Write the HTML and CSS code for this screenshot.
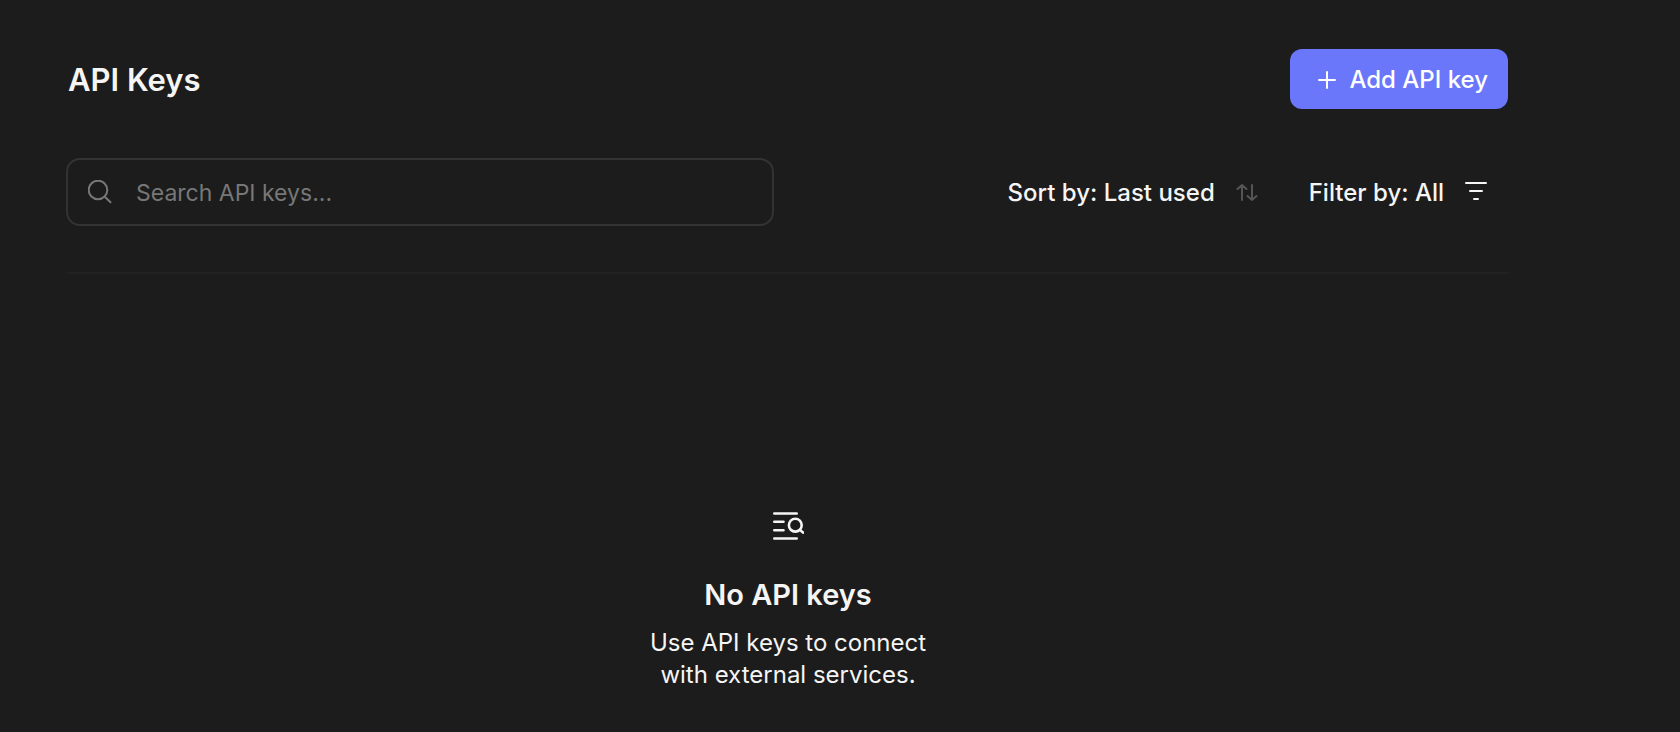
FILE: index.html
```html
<!DOCTYPE html>
<html lang="en">
<head>
  <meta charset="UTF-8" />
  <meta name="viewport" content="width=device-width, initial-scale=1.0"/>
  <title>API Keys</title>
  <link rel="stylesheet" href="styles.css">
</head>
<body>
  <main class="page">
    <header class="page-header">
      <h1>API Keys</h1>
      <button type="button" class="add-button">
        <svg width="20" height="20" viewBox="0 0 20 20" fill="none" stroke="currentColor" stroke-width="2" stroke-linecap="round" aria-hidden="true">
          <path d="M10 2v16M2 10h16"/>
        </svg>
        Add API key
      </button>
    </header>

    <div class="toolbar">
      <label class="search">
        <svg width="24" height="24" viewBox="0 0 24 24" fill="none" stroke="currentColor" stroke-width="2" stroke-linecap="round" aria-hidden="true">
          <circle cx="10" cy="10" r="9.3"/>
          <path d="M16.8 16.8l5.7 5.4"/>
        </svg>
        <input type="search" placeholder="Search API keys..." aria-label="Search API keys" />
      </label>
      <div class="controls">
        <button type="button" class="control">
          Sort by: Last used
          <svg class="muted" width="24" height="24" viewBox="0 0 24 24" fill="none" stroke="currentColor" stroke-width="2" stroke-linecap="round" stroke-linejoin="round" aria-hidden="true">
            <path d="M7 19V4M2.5 8L7 4l4.5 4M17 4v15M12.5 15l4.500 4 4.500-4"/>
          </svg>
        </button>
        <button type="button" class="control">
          Filter by: All
          <svg width="24" height="24" viewBox="0 0 24 24" fill="none" stroke="currentColor" stroke-width="2" stroke-linecap="round" aria-hidden="true">
            <path d="M2 2h20M6 10h12M10 18h4"/>
          </svg>
        </button>
      </div>
    </div>

    <section class="empty">
      <svg width="32" height="32" viewBox="0 0 32 32" fill="none" stroke="currentColor" stroke-width="2.6" stroke-linecap="round" aria-hidden="true">
        <path d="M2.3 3.5h22.4M2.3 11.8h9.2M2.3 20.2h9.2M2.3 28.5h22.4"/>
        <circle cx="23.3" cy="15.2" r="6.4"/>
        <path d="M28 20l3 2.6"/>
      </svg>
      <h2>No API keys</h2>
      <p>Use API keys to connect with external services.</p>
    </section>
  </main>
</body>
</html>
```
FILE: styles.css
```css
* {
  box-sizing: border-box;
}
body {
  font-family: Inter, sans-serif;
  font-size: 24px;
  line-height: 32px;
  margin: 0;
  background-color: #1c1c1c;
  color: #f5f5f5;
}
h1, h2, p {
  margin: 0;
}
svg {
  flex-shrink: 0;
}
button, input {
  font: inherit;
  color: inherit;
  background: none;
  border: none;
}
button {
  cursor: pointer;
}
.page {
  margin-left: 68px;
  margin-right: 172px;
  padding-top: 49px;
}
.page-header {
  display: flex;
  justify-content: space-between;
  align-items: center;
}
h1 {
  padding-top: 2px;
  font-size: 31px;
  line-height: 40px;
  font-weight: 600;
}
.add-button {
  display: flex;
  align-items: center;
  gap: 12px;
  height: 60px;
  padding: 2px 20px 0 27px;
  background-color: #6a77fa;
  color: white;
  font-weight: 500;
  border-radius: 12px;
}
.add-button:hover {
  background-color: #7a86fb;
}
.toolbar {
  display: flex;
  justify-content: space-between;
  align-items: center;
  margin-top: 49px;
  padding-bottom: 46px;
  border-bottom: 2px solid #222222;
}
.search {
  display: flex;
  align-items: center;
  gap: 24px;
  width: calc(49% + 2px);
  height: 68px;
  margin-left: -2px;
  padding: 0 20px;
  border: 2px solid #333333;
  border-radius: 14px;
  color: #777777;
}
.search input {
  flex: 1;
  min-width: 0;
  padding: 2px 0 0;
  font-size: 23px;
  outline: none;
}
.search input::placeholder {
  color: #777777;
  opacity: 1;
}
.controls {
  display: flex;
  gap: 50px;
  padding-right: 20px;
}
.control {
  display: flex;
  align-items: center;
  gap: 20px;
  padding: 2px 0 0;
  font-weight: 500;
}
.muted {
  color: #555555;
}
.empty {
  display: flex;
  flex-direction: column;
  align-items: center;
  padding: 236px 0 32px;
  text-align: center;
}
.empty h2 {
  margin-top: 33px;
  font-size: 29px;
  line-height: 40px;
  font-weight: 600;
}
.empty p {
  max-width: 300px;
  margin-top: 12px;
}
```
